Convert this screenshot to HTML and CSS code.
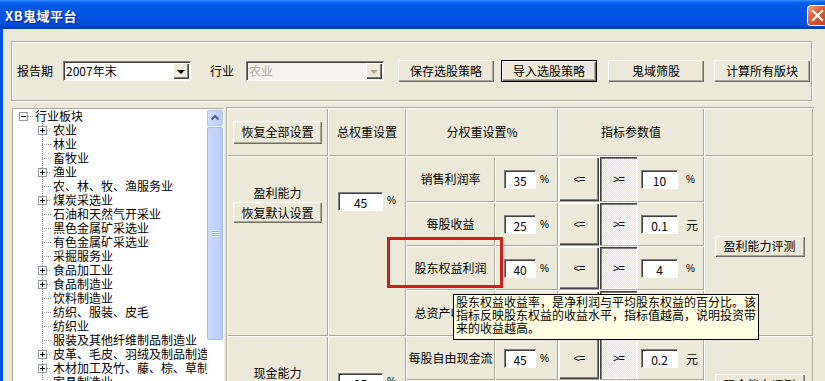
FILE: index.html
```html
<!DOCTYPE html>
<html lang="zh-CN">
<head>
<meta charset="utf-8">
<title>XB鬼域平台</title>
<link rel="stylesheet" href="styles.css">
</head>
<body>
<div class="window">
  <div class="titlebar">
    <span class="title">XB鬼域平台</span>
    <svg class="close" width="21" height="21" viewBox="0 0 21 21">
      <defs>
        <linearGradient id="cg" x1="0" y1="0" x2="1" y2="1">
          <stop offset="0" stop-color="#F4A88A"/>
          <stop offset="0.35" stop-color="#E3633E"/>
          <stop offset="1" stop-color="#C03C1A"/>
        </linearGradient>
      </defs>
      <rect x="0.5" y="0.5" width="20" height="20" rx="3" fill="url(#cg)" stroke="#fff"/>
      <path d="M6 6 L15 15 M15 6 L6 15" stroke="#fff" stroke-width="2.2" stroke-linecap="square"/>
    </svg>
  </div>
  <div class="client">
    <div class="groupbox">
      <span class="lbl">报告期</span>
      <div class="combo period"><span class="combo-text">2007年末</span><span class="drop"><i class="tri"></i></span></div>
      <span class="lbl industry">行业</span>
      <div class="combo disabled"><span class="combo-text">农业</span><span class="drop"><i class="tri"></i></span></div>
      <button class="btn tb b-save">保存选股策略</button>
      <button class="btn tb default b-import">导入选股策略</button>
      <button class="btn tb b-screen">鬼域筛股</button>
      <button class="btn tb b-calc">计算所有版块</button>
    </div>
    <div class="lower">
      <div class="tree">
        <div class="tree-body">
          <div class="node root"><span class="box minus"></span><span class="stub rstub"></span><span class="label">行业板块</span></div>
          <div class="children">
            <div class="node"><span class="box plus"></span><span class="stub short"></span><span class="label hot">农业</span></div>
            <div class="node"><span class="stub long"></span><span class="label">林业</span></div>
            <div class="node"><span class="stub long"></span><span class="label">畜牧业</span></div>
            <div class="node"><span class="box plus"></span><span class="stub short"></span><span class="label">渔业</span></div>
            <div class="node"><span class="stub long"></span><span class="label">农、林、牧、渔服务业</span></div>
            <div class="node"><span class="box plus"></span><span class="stub short"></span><span class="label">煤炭采选业</span></div>
            <div class="node"><span class="stub long"></span><span class="label">石油和天然气开采业</span></div>
            <div class="node"><span class="stub long"></span><span class="label">黑色金属矿采选业</span></div>
            <div class="node"><span class="stub long"></span><span class="label">有色金属矿采选业</span></div>
            <div class="node"><span class="stub long"></span><span class="label">采掘服务业</span></div>
            <div class="node"><span class="box plus"></span><span class="stub short"></span><span class="label">食品加工业</span></div>
            <div class="node"><span class="box plus"></span><span class="stub short"></span><span class="label">食品制造业</span></div>
            <div class="node"><span class="stub long"></span><span class="label">饮料制造业</span></div>
            <div class="node"><span class="stub long"></span><span class="label">纺织、服装、皮毛</span></div>
            <div class="node"><span class="stub long"></span><span class="label">纺织业</span></div>
            <div class="node"><span class="stub long"></span><span class="label">服装及其他纤维制品制造业</span></div>
            <div class="node"><span class="box plus"></span><span class="stub short"></span><span class="label">皮革、毛皮、羽绒及制品制造业</span></div>
            <div class="node"><span class="box plus"></span><span class="stub short"></span><span class="label">木材加工及竹、藤、棕、草制品业</span></div>
            <div class="node"><span class="stub long"></span><span class="label">家具制造业</span></div>
          </div>
        </div>
        <div class="vscroll-col">
          <div class="vscroll">
            <div class="sb-up">
              <svg width="14" height="14" viewBox="0 0 14 14"><path d="M3.5 8.5 L7 5 L10.5 8.5" fill="none" stroke="#4D6185" stroke-width="2"/></svg>
            </div>
            <div class="sb-thumb"><span class="grip"></span></div>
          </div>
        </div>
      </div>

      <div class="grid">
        <div class="cell"><button class="btn gbtn hbtn">恢复全部设置</button></div>
        <div class="cell">总权重设置</div>
        <div class="cell span2c">分权重设置%</div>
        <div class="cell span3c">指标参数值</div>
        <div class="cell"></div>

        <div class="cell span4r gcap"><span class="cap">盈利能力</span><button class="btn gbtn dbtn">恢复默认设置</button></div>
        <div class="cell span4r wcell"><span class="edit w45">45</span><span class="pct">%</span></div>
        <div class="cell">销售利润率</div>
        <div class="cell pair"><span class="edit w32">35</span><span class="pct">%</span></div>
        <div class="cell bcell"><span class="tbtn up">&lt;=</span></div>
        <div class="cell bcell"><span class="tbtn down">&gt;=</span></div>
        <div class="cell vcell"><span class="edit w37">10</span><span class="pct">%</span></div>
        <div class="cell span4r"><button class="btn gbtn ebtn">盈利能力评测</button></div>

        <div class="cell">每股收益</div>
        <div class="cell pair"><span class="edit w32">25</span><span class="pct">%</span></div>
        <div class="cell bcell"><span class="tbtn up">&lt;=</span></div>
        <div class="cell bcell"><span class="tbtn down">&gt;=</span></div>
        <div class="cell vcell"><span class="edit w37">0.1</span><span class="unit">元</span></div>

        <div class="cell">股东权益利润</div>
        <div class="cell pair"><span class="edit w32">40</span><span class="pct">%</span></div>
        <div class="cell bcell"><span class="tbtn up">&lt;=</span></div>
        <div class="cell bcell"><span class="tbtn down">&gt;=</span></div>
        <div class="cell vcell"><span class="edit w37">4</span><span class="pct">%</span></div>

        <div class="cell">总资产收益率</div>
        <div class="cell pair"><span class="edit w32">0</span><span class="pct">%</span></div>
        <div class="cell bcell"><span class="tbtn up">&lt;=</span></div>
        <div class="cell bcell"><span class="tbtn down">&gt;=</span></div>
        <div class="cell vcell"><span class="edit w37">5</span><span class="pct">%</span></div>

        <div class="cell span2r gcap"><span class="cap">现金能力</span><button class="btn gbtn dbtn">恢复默认设置</button></div>
        <div class="cell span2r wcell w2"><span class="edit w45">25</span><span class="pct">%</span></div>
        <div class="cell">每股自由现金流</div>
        <div class="cell pair"><span class="edit w32">45</span><span class="pct">%</span></div>
        <div class="cell bcell"><span class="tbtn up">&lt;=</span></div>
        <div class="cell bcell"><span class="tbtn down">&gt;=</span></div>
        <div class="cell vcell"><span class="edit w37">0.2</span><span class="unit">元</span></div>
        <div class="cell span2r ecell2"><button class="btn gbtn ebtn">现金能力评测</button></div>

        <div class="cell">每股现金流</div>
        <div class="cell pair"><span class="edit w32">55</span><span class="pct">%</span></div>
        <div class="cell bcell"><span class="tbtn up">&lt;=</span></div>
        <div class="cell bcell"><span class="tbtn down">&gt;=</span></div>
        <div class="cell vcell"><span class="edit w37">0.3</span><span class="unit">元</span></div>
      </div>
    </div>
  </div>
  <div class="callout"></div>
  <div class="tooltip">股东权益收益率，是净利润与平均股东权益的百分比。该<br>指标反映股东权益的收益水平，指标值越高，说明投资带<br>来的收益越高。</div>
</div>
</body>
</html>
```

FILE: styles.css
```css
* { box-sizing: border-box; }
html, body { margin: 0; padding: 0; }
body {
  width: 825px;
  height: 381px;
  overflow: hidden;
  background: #ECE9D8;
  font-family: "Noto Sans CJK SC", "Noto Sans", sans-serif;
  font-size: 12px;
  color: #000;
}
.window {
  position: relative;
  width: 825px;
  height: 381px;
  display: flex;
  flex-direction: column;
  overflow: hidden;
}

/* title bar */
.titlebar {
  flex: none;
  height: 29px;
  display: flex;
  align-items: center;
  padding-left: 5px;
  overflow: hidden;
  background: linear-gradient(to bottom, #3D95FF 0, #0A66F2 2px, #0058E6 5px, #0055E5 45%, #0050E0 75%, #0048D4 90%, #0039B4 100%);
}
.title {
  color: #fff;
  font-weight: bold;
  font-size: 13px;
  line-height: 16px;
  margin-top: 2px;
  text-shadow: 1px 1px #0A1E8C;
  letter-spacing: 0.5px;
}
.close {
  margin-left: auto;
  margin-right: -3px;
  margin-top: 2px;
  flex: none;
}

/* client */
.client {
  flex: 1;
  min-height: 0;
  border-left: 3px solid #0053E2;
  padding: 12px 0 0 8px;
  display: flex;
  flex-direction: column;
}
.groupbox {
  flex: none;
  width: 801px;
  height: 60px;
  border: 1px solid #ACA899;
  box-shadow: inset 1px 1px #fff, 1px 1px #fff;
  display: flex;
  align-items: center;
  padding-left: 5px;
}
.lbl { line-height: 14px; white-space: nowrap; }
.industry { margin-left: 19px; }
.combo {
  height: 20px;
  border: 1px solid;
  border-color: #808080 #fff #fff #808080;
  box-shadow: inset 1px 1px #404040;
  background: #fff;
  display: flex;
  align-items: center;
  padding: 1px 1px 1px 2px;
}
.period { width: 128px; margin-left: 10px; }
.combo.disabled { width: 138px; margin-left: 12px; background: #F4F3EE; color: #ACA899; }
.combo-text { flex: 1; line-height: 16px; white-space: nowrap; }
.drop {
  width: 16px;
  height: 16px;
  background: #ECE9D8;
  box-shadow: inset 1px 1px #fff, inset -1px -1px #404040, inset -2px -2px #808080;
  display: flex;
  align-items: center;
  justify-content: center;
}
.tri {
  width: 0;
  height: 0;
  border-left: 4px solid transparent;
  border-right: 4px solid transparent;
  border-top: 4px solid #000;
  margin-top: 1px;
}
.disabled .tri { border-top-color: #ACA899; }

.btn {
  font-family: inherit;
  font-size: 12px;
  color: #000;
  background: #ECE9D8;
  border: none;
  padding: 0;
  box-shadow: inset 1px 1px #fff, inset -1px -1px #716F64, inset -2px -2px #ACA899;
  white-space: nowrap;
  line-height: 14px;
}
.tb { width: 96px; height: 22px; }
.b-save { margin-left: 14px; }
.b-import { margin-left: 7px; }
.b-screen { margin-left: 11px; }
.b-calc { margin-left: 10px; }
.btn.default {
  border: 1px solid #000;
  box-shadow: inset 1px 1px #fff, inset -1px -1px #716F64, inset -2px -2px #ACA899;
}

/* lower area */
.lower {
  flex: none;
  margin-top: 6px;
  display: flex;
  align-items: flex-start;
}

/* tree */
.tree {
  margin-left: 1px;
  margin-top: 1px;
  width: 212px;
  height: 300px;
  background: #fff;
  border: 1px solid;
  border-color: #ACA899 #fff #fff #ACA899;
  display: flex;
}
.tree-body {
  width: 194px;
  overflow: hidden;
  white-space: nowrap;
}
.node {
  height: 14px;
  display: flex;
  align-items: center;
  line-height: 14px;
}
.root { padding-left: 6px; }
.children {
  background-image: repeating-linear-gradient(to bottom, #8E8E8E 0 1px, transparent 1px 2px);
  background-size: 1px 100%;
  background-position: 29px 0;
  background-repeat: no-repeat;
}
.children .node { padding-left: 25px; }
.box {
  flex: none;
  width: 9px;
  height: 9px;
  border: 1px solid #919B9C;
  background-color: #fff;
  background-repeat: no-repeat;
}
.box.plus {
  background-image: linear-gradient(#000, #000), linear-gradient(#000, #000);
  background-size: 5px 1px, 1px 5px;
  background-position: 1px 3px, 3px 1px;
}
.box.minus {
  background-image: linear-gradient(#000, #000);
  background-size: 5px 1px;
  background-position: 1px 3px;
}
.stub {
  flex: none;
  height: 1px;
  background: repeating-linear-gradient(to right, #8E8E8E 0 1px, transparent 1px 2px);
  margin-right: 2px;
}
.rstub { width: 5px; }
.short { width: 4px; }
.long { width: 9px; margin-left: 4px; }
.label { padding: 0 1px; margin-left: -1px; }
.hot { background: #F3F1E8; }

.vscroll-col { width: 16px; flex: none; }
.vscroll {
  margin-top: 1px;
  width: 16px;
  height: 230px;
  display: flex;
  flex-direction: column;
  background: #EEF2FD;
}
.sb-up {
  height: 16px;
  border: 1px solid #B3C5F3;
  border-radius: 2px;
  background: linear-gradient(to right, #D2DEFD, #BACCF8);
  display: flex;
  align-items: center;
  justify-content: center;
}
.sb-thumb {
  flex: 1;
  margin-top: 1px;
  border: 1px solid #A4B9EF;
  border-radius: 2px;
  background: linear-gradient(to right, #CCDAFD, #B7CAF8);
  display: flex;
  align-items: center;
  justify-content: center;
}
.grip {
  width: 7px;
  height: 7px;
  background: repeating-linear-gradient(to bottom, #EEF4FE 0 1px, #8CA8E8 1px 2px);
}

/* grid */
.grid {
  margin-left: 2px;
  width: 588px;
  border-top: 1px solid #ACA899;
  border-left: 1px solid #ACA899;
  display: grid;
  grid-template-columns: 101px 78px 89px 63px 41px 38px 67px 109px;
  grid-template-rows: 48px 46px 44px 44px 46px 44px 44px;
}
.cell {
  background: #ECE9D8;
  box-shadow: inset 1px 1px #fff, inset -1px -1px #ACA899;
  display: flex;
  align-items: center;
  justify-content: center;
  white-space: nowrap;
  line-height: 14px;
}
.span2c { grid-column: span 2; }
.span3c { grid-column: span 3; }
.span4r { grid-row: span 4; }
.span2r { grid-row: span 2; }

.gbtn { width: 89px; }
.hbtn { height: 23px; }
.dbtn { height: 21px; margin-top: 2px; }
.ebtn { width: 90px; height: 21px; margin-left: 2px; }
.gcap {
  flex-direction: column;
  justify-content: flex-start;
  padding-top: 30px;
}
.cap { line-height: 14px; }
.wcell {
  align-items: flex-start;
  padding-top: 36px;
  gap: 4px;
}
.wcell.w2 { padding-top: 37px; }
.ecell2 { align-items: flex-start; padding-top: 38px; }

.edit {
  background: #fff;
  height: 19px;
  border: 1px solid;
  border-color: #808080 #fff #fff #808080;
  box-shadow: inset 1px 1px #404040;
  text-align: center;
  line-height: 17px;
  font-size: 12px;
  padding-top: 1px;
}
.w45 { width: 45px; }
.w32 { width: 32px; }
.w37 { width: 37px; }
.pct {
  font-family: "Liberation Sans", sans-serif;
  font-size: 10px;
  line-height: 19px;
}
.unit { line-height: 19px; }
.pair { gap: 4px; }
.wcell .pct { line-height: 18px; }
.vcell {
  justify-content: flex-start;
  padding-left: 4px;
  gap: 8px;
}

.bcell { padding: 1px 0 1px 1px; align-items: stretch; justify-content: stretch; }
.tbtn {
  flex: 1;
  display: flex;
  align-items: center;
  justify-content: center;
  font-family: "Liberation Sans", sans-serif;
  font-size: 11px;
  letter-spacing: -1px;
}
.tbtn.up {
  background: #ECE9D8;
  box-shadow: inset 1px 1px #fff, inset -1px -1px #404040, inset -2px -2px #808080;
}
.tbtn.down {
  background: repeating-conic-gradient(#FFFFFF 0% 25%, #E4E1D2 0% 50%) 0 0 / 2px 2px;
  box-shadow: inset 1px 1px #404040, inset 2px 2px #808080, inset -1px -1px #fff;
}

/* overlays */
.callout {
  position: absolute;
  left: 387px;
  top: 237px;
  width: 116px;
  height: 51px;
  border: 3px solid #CC1F1E;
}
.tooltip {
  position: absolute;
  left: 453px;
  top: 294px;
  width: 306px;
  height: 46px;
  background: #FFFFE1;
  border: 1px solid #000;
  padding: 0 0 0 2px;
  font-size: 12px;
  line-height: 13px;
  white-space: nowrap;
}
```
